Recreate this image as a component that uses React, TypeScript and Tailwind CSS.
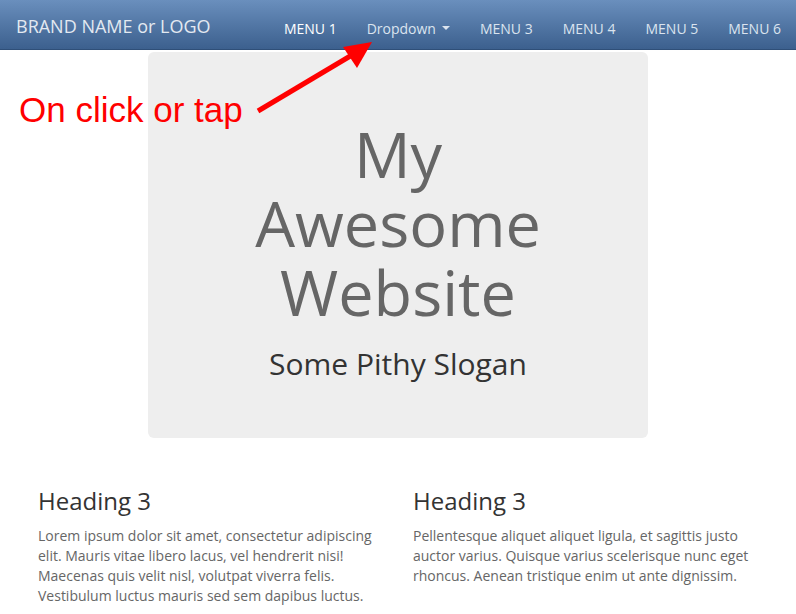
import React from "react";

const menu = ["MENU 3", "MENU 4", "MENU 5", "MENU 6"];

export default function App() {
  return (
    <div className="relative min-h-[614px] bg-white" style={{ fontFamily: '"Open Sans", sans-serif' }}>
      <nav className="flex h-[50px] items-center justify-between border-b border-[#2f4f78] bg-gradient-to-b from-[#6a8fbd] to-[#3c608e]">
        <div className="pl-4 pt-[3px] text-[18px] text-[#e3e9f1]">BRAND NAME or LOGO</div>
        <ul className="flex items-center pt-[7px] text-[14px] text-[#dbe4ef]">
          <li className="px-[15px] text-white">MENU 1</li>
          <li className="flex items-center px-[15px]">
            Dropdown
            <span className="ml-[6px] inline-block h-0 w-0 border-x-[4px] border-t-[4px] border-x-transparent border-t-[#dbe4ef]" />
          </li>
          {menu.map((m) => (
            <li key={m} className="px-[15px]">{m}</li>
          ))}
        </ul>
      </nav>

      <div className="mx-auto mt-[2px] w-[500px] rounded-[6px] bg-[#eeeeee] pb-[53px] pt-[67px] text-center">
        <h1 className="text-[63px] leading-[69px] text-[#666666]">
          <span className="block">My</span>
          <span className="block">Awesome</span>
          <span className="block">Website</span>
        </h1>
        <p className="mt-[17px] text-[30px] leading-[42px] text-[#333333]">Some Pithy Slogan</p>
      </div>

      <div className="mx-auto mt-[48px] grid w-[750px] grid-cols-2">
        <div className="px-[15px]">
          <h3 className="text-[24px] leading-[30px] text-[#333333]">Heading 3</h3>
          <p className="mt-[10px] text-[14px] leading-[20px] text-[#666666]">
            Lorem ipsum dolor sit amet, consectetur adipiscing elit. Mauris vitae libero lacus, vel hendrerit nisi! Maecenas quis velit nisl, volutpat viverra felis. Vestibulum luctus mauris sed sem dapibus luctus.
          </p>
        </div>
        <div className="px-[15px]">
          <h3 className="text-[24px] leading-[30px] text-[#333333]">Heading 3</h3>
          <p className="mt-[10px] text-[14px] leading-[20px] text-[#666666]">
            Pellentesque aliquet aliquet ligula, et sagittis justo auctor varius. Quisque varius scelerisque nunc eget rhoncus. Aenean tristique enim ut ante dignissim.
          </p>
        </div>
      </div>

      <div
        className="absolute left-[19px] top-[90px] text-[35px] leading-[40px] text-[#ff0000]"
        style={{ fontFamily: '"Liberation Sans", Arial, sans-serif' }}
      >
        On click or tap
      </div>
      <svg className="absolute left-0 top-0" width="796" height="140" viewBox="0 0 796 140">
        <line x1="258" y1="111" x2="352" y2="55" stroke="#ff0000" strokeWidth="5" />
        <polygon points="372,42 343,47 357,68" fill="#ff0000" />
      </svg>
    </div>
  );
}
